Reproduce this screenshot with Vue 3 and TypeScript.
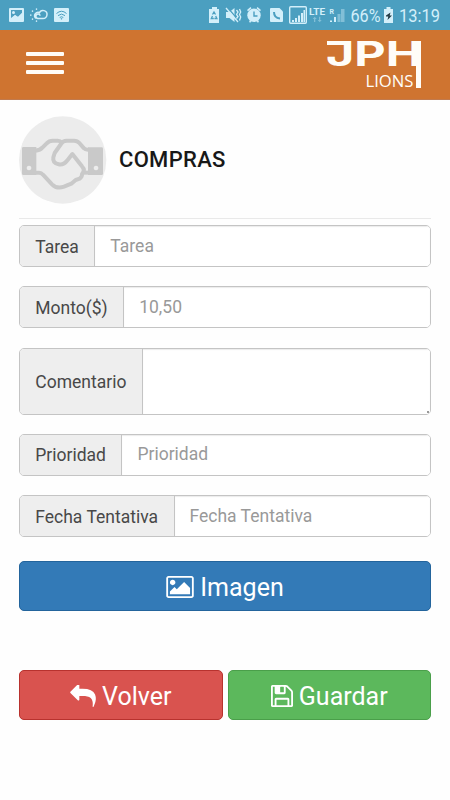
<script setup lang="ts">
import { ref } from 'vue'

interface Field {
  id: string
  label: string
  placeholder: string
  multiline?: boolean
}

const fields: Field[] = [
  { id: 'tarea', label: 'Tarea', placeholder: 'Tarea' },
  { id: 'monto', label: 'Monto($)', placeholder: '10,50' },
  { id: 'comentario', label: 'Comentario', placeholder: '', multiline: true },
  { id: 'prioridad', label: 'Prioridad', placeholder: 'Prioridad' },
  { id: 'fecha', label: 'Fecha Tentativa', placeholder: 'Fecha Tentativa' },
]

const values = ref<Record<string, string>>({})
</script>

<template>
  <div class="screen">
    <div class="status">
      <svg class="status-left" viewBox="0 0 80 30">
        <g fill="#d3effa">
          <path fill-rule="evenodd" d="M10 8h13q1 0 1 1v12q0 1-1 1H10q-1 0-1-1V9q0-1 1-1zM11 10v8l4-3 3 2 4-4v-3z" />
          <path d="M11 19l4-4 3 2 4-4v7H11z" />
          <circle cx="13.5" cy="12.5" r="1.5" />
          <rect x="54" y="8" width="15" height="14" rx="1" />
        </g>
        <g fill="none" stroke="#d3effa" stroke-width="1.5" stroke-linecap="round">
          <path d="M35.500 18a3.500 3.500 0 0 1 4-5.500M38 18.500h5a4 4 0 1 0-3.700-5.500M38 18.500a2.200 2.200 0 1 1 2-3.300" />
          <path d="M36.5 9v.2M32.5 11v.2M30.8 15v.2M32.5 19v.2M36.5 21v.2" />
        </g>
        <g fill="none" stroke="#4b9fc0" stroke-width="1">
          <path d="M56.5 13.5q5-4.5 10 0M58 15.6q3.500-3 7 0M59.700 17.500q1.800-1.500 3.600 0" />
          <circle cx="61.500" cy="18.800" r=".4" />
        </g>
      </svg>
      <svg class="status-right" viewBox="200 0 250 30">
        <g fill="#d3effa">
          <path d="M212 7h5v2h2v14h-10V9h3z" />
          <path d="M226 12h3.500l5-4v14l-5-4H226z" />
          <circle cx="254" cy="15.300" r="6.700" />
          <path d="M247 10l3.500-3 1 1.200-3.500 3zM261 10l-3.500-3-1 1.200 3.500 3zM249 21l1.500-1 1 1-1.500 2zM259 21l-1.500-1-1 1 1.500 2z" />
          <path d="M271 8h8.500l3.500 3.500V21q0 1-1 1h-11q-1 0-1-1V9q0-1 1-1z" />
          <path d="M292 20h2v2h-2zM295 18h2v4h-2zM298 15.500h2V22h-2zM301 13h2v9h-2zM303.500 10h1.500v12h-1.500z" />
          <path d="M330 20.500h2v1.500h-2zM334 17h2v5h-2z" />
          <path opacity=".4" d="M337.500 14h3v8h-3zM341 9h3.500v13H341z" />
          <path opacity=".4" d="M314 22v-3h-1.300l2-2.300 2 2.300h-1.400v3zM319 16.700V20h-1.300l2 2.300 2-2.300h-1.400v-3.300z" />
          <path d="M386.500 7h4v2h2.500v14h-9V9h2.500z" />
        </g>
        <g fill="none" stroke="#4b9fc0">
          <path stroke-width="1.300" d="M212.500 14.500l1.500-2.500 1.500 2.500M212.500 16l-1.200 2.500h2.500M215.700 16l1.200 2.500h-2.500" />
          <path stroke-width="1.400" d="M254 11.500V16h3.500" />
          <path stroke-width="2" d="M274 12q0 6 6 6.500" />
          <path stroke-width="1.200" d="M227.500 7.500l12 14" />
        </g>
        <path fill="none" stroke="#d3effa" stroke-width="1.300" d="M226 8l12 14M236.500 10l1.500 2-1.500 2.500 1.500 2-1.500 2M239.500 9l1.200 3-1.200 2.500 1.200 2.500-1.200 3.500" />
        <rect x="289.700" y="6.700" width="16.600" height="16.600" rx="1" fill="none" stroke="#d3effa" stroke-width="1.400" />
        <path fill="#243c46" d="M386 15.500l4.500-3-.8 3H392l-4.500 4.500.8-3.500H386z" />
        <g class="status-text" fill="#d3effa">
          <text x="309" y="15.300" class="tiny" textLength="16" lengthAdjust="spacingAndGlyphs">LTE</text>
          <text x="329.500" y="13.800" class="tinier">R</text>
          <text x="350.500" y="22.300" textLength="30" lengthAdjust="spacingAndGlyphs">66%</text>
          <text x="399" y="22.300" textLength="41" lengthAdjust="spacingAndGlyphs">13:19</text>
        </g>
      </svg>
    </div>

    <header class="navbar">
      <button class="menu" type="button">
        <span class="bar"></span>
        <span class="bar"></span>
        <span class="bar"></span>
      </button>
      <svg class="logo" viewBox="324 32 100 64" fill="#fffdf8">
        <rect x="327" y="41" width="18" height="4" />
        <text class="logo-main" x="326" y="65.500" textLength="96" lengthAdjust="spacingAndGlyphs">JPH</text>
        <rect x="416" y="41" width="5" height="47" />
        <text class="logo-sub" x="365.500" y="87" textLength="48" lengthAdjust="spacingAndGlyphs">LIONS</text>
      </svg>
    </header>

    <main class="content">
      <div class="heading">
        <svg class="avatar" viewBox="27 33 264 264">
          <circle cx="158" cy="165" r="131" fill="#ececec" />
          <path fill="#c9c9c9" fill-rule="evenodd" d="M40 126h39v84H40q-4 0-4-4v-76q0-4 4-4zM57 182a7 7 0 1 0 .1 0zM234 127h41q4 0 4 4v75q0 4-4 4h-41zM258 182a7 7 0 1 0 .1 0z" />
          <g fill="none" stroke="#c9c9c9" stroke-width="12" stroke-linejoin="round">
            <path d="M76 137Q91 136 98 127L110 115Q117 107 128 107H143Q151 107 156 113" />
            <path d="M76 203H87Q94 203 99 209L126 238Q141 253 162 245L184 236 197 225 209 221Q217 215 216 207 227 195 216 184L187 147 173 165Q161 181 146 178 127 174 130 157L134 144 153 117Q159 107 170 107H192Q202 107 208 114L222 130Q226 135 237 134" />
            <path d="M216 203H237" />
          </g>
        </svg>
        <h1 class="title">COMPRAS</h1>
      </div>

      <form class="form" @submit.prevent>
        <div v-for="f in fields" :key="f.id" class="group" :class="{ tall: f.multiline }">
          <label class="addon" :for="f.id">{{ f.label }}</label>
          <textarea v-if="f.multiline" :id="f.id" v-model="values[f.id]" class="control"></textarea>
          <input v-else :id="f.id" v-model="values[f.id]" class="control" type="text" :placeholder="f.placeholder" />
        </div>

        <button class="btn primary" type="button">
          <svg class="icon-picture" viewBox="-64 128 1920 1536" fill="#fff">
            <path d="M576 576q0 80-56 136t-136 56-136-56-56-136 56-136 136-56 136 56 56 136zm1024 384v448h-1408v-192l320-320 160 160 512-512zm96-704h-1600q-13 0-22.500 9.500t-9.500 22.500v1216q0 13 9.500 22.500t22.500 9.500h1600q13 0 22.500-9.500t9.500-22.500v-1216q0-13-9.500-22.500t-22.500-9.500zm160 32v1216q0 66-47 113t-113 47h-1600q-66 0-113-47t-47-113v-1216q0-66 47-113t113-47h1600q66 0 113 47t47 113z" />
          </svg>
          <span>Imagen</span>
        </button>

        <div class="actions">
          <button class="btn danger" type="button">
            <svg class="icon-reply" viewBox="0 128 1792 1536" fill="#fff">
              <path transform="matrix(-1 0 0 1 1792 0)" d="M1792 640q0 26-19 45l-512 512q-19 19-45 19t-45-19-19-45v-256h-224q-98 0-175.500 6t-154 21.500-133 42.500-105.500 69.500-80 101-48.500 138.500-17.500 181q0 55 5 123 0 6 2.500 23.500t2.500 26.500q0 15-8.500 25t-23.500 10q-16 0-28-17-7-9-13-22t-13.500-30-10.500-24q-127-285-127-451 0-199 53-333 162-403 875-403h224v-256q0-26 19-45t45-19 45 19l512 512q19 19 19 45z" />
            </svg>
            <span>Volver</span>
          </button>
          <button class="btn success" type="button">
            <svg class="icon-save" viewBox="128 128 1536 1536" fill="#fff">
              <path d="M512 1536h768v-384h-768v384zm896 0h128v-896q0-14-10-38.500t-20-34.500l-281-281q-10-10-34-20t-39-10v416q0 40-28 68t-68 28h-576q-40 0-68-28t-28-68v-416h-128v1280h128v-416q0-40 28-68t68-28h832q40 0 68 28t28 68v416zm-384-928v-320q0-13-9.500-22.500t-22.500-9.500h-192q-13 0-22.500 9.500t-9.500 22.500v320q0 13 9.500 22.500t22.500 9.500h192q13 0 22.500-9.500t9.500-22.500zm640 32v928q0 40-28 68t-68 28h-1344q-40 0-68-28t-28-68v-1344q0-40 28-68t68-28h928q40 0 88 20t76 48l280 280q28 28 48 76t20 88z" />
            </svg>
            <span>Guardar</span>
          </button>
        </div>
      </form>
    </main>
  </div>
</template>

<style>
body {
  background: #fff;
}
</style>

<style scoped>
.screen {
  width: 450px;
  height: 800px;
  overflow: hidden;
  background: #fefefe;
  font-family: Roboto, sans-serif;
}
.screen * {
  box-sizing: border-box;
}
.status {
  display: flex;
  justify-content: space-between;
  height: 30px;
  background: #4b9fc0;
}
.status-left {
  width: 80px;
  height: 30px;
}
.status-right {
  width: 250px;
  height: 30px;
}
.status-text {
  font-size: 19px;
}
.tiny {
  font-size: 8.5px;
  font-weight: 700;
}
.tinier {
  font-size: 7px;
  font-weight: 700;
}
.navbar {
  display: flex;
  justify-content: space-between;
  height: 70px;
  padding: 2px 26px 0;
  background: #cf7430;
  border-bottom: 1px solid #c17a4d;
}
.menu {
  display: flex;
  flex-direction: column;
  gap: 5px;
  width: 38px;
  height: 36px;
  margin-top: 20px;
  padding: 0;
  border: 0;
  background: none;
}
.bar {
  width: 38px;
  height: 4px;
  border-radius: 1px;
  background: #fffdf8;
}
.logo {
  width: 100px;
  height: 64px;
  overflow: visible;
}
.logo-main {
  font-family: Inter, sans-serif;
  font-size: 33.500px;
  font-weight: 700;
}
.logo-sub {
  font-family: "Open Sans", sans-serif;
  font-size: 17px;
}
.content {
  padding: 16px 19px 0;
}
.heading {
  display: flex;
  align-items: center;
  gap: 12px;
  height: 103px;
  padding-bottom: 14px;
  border-bottom: 1px solid #e9e9e9;
}
.avatar {
  flex: none;
  width: 88px;
  height: 88px;
}
.title {
  margin: 0;
  font-size: 22px;
  font-weight: 500;
  line-height: 26px;
  letter-spacing: 0.3px;
  color: #181818;
}
.form {
  display: flex;
  flex-direction: column;
  padding-top: 6px;
}
.group {
  display: flex;
  width: 412px;
  height: 42px;
  margin-bottom: 19.400px;
  border: 1px solid #c4c4c4;
  border-radius: 5px;
  overflow: hidden;
}
.group.tall {
  height: 67px;
  margin-bottom: 19px;
}
.addon {
  flex: none;
  display: flex;
  align-items: center;
  padding: 1px 15.500px 0 15.300px;
  border-right: 1px solid #c4c4c4;
  background: #eee;
  color: #484848;
  font-size: 17.500px;
}
.control {
  flex: 1;
  min-width: 0;
  padding: 0 15px 1px;
  border: 0;
  outline: 0;
  resize: none;
  background: #fff;
  box-shadow: inset 0 1px 1px rgba(0, 0, 0, 0.08);
  color: #555;
  font: 17.500px Roboto, sans-serif;
}
textarea.control {
  background: linear-gradient(#999, #999) right 1px bottom 1px / 2px 2px no-repeat #fff;
}
.control::placeholder {
  color: #999;
  opacity: 1;
}
.btn {
  display: flex;
  align-items: center;
  justify-content: center;
  gap: 6px;
  height: 50px;
  padding: 3px 0 0;
  border: 1px solid;
  border-radius: 5px;
  color: #fff;
  font: 25px/30px Roboto, sans-serif;
}
.btn span {
  padding-top: 1px;
}
.primary {
  width: 412px;
  margin-top: 4.400px;
  background: #337ab7;
  border-color: #23649c;
}
.actions {
  display: grid;
  grid-template-columns: 203.500px 203.500px;
  gap: 5px;
  margin-top: 59px;
}
.danger {
  background: #d9534f;
  border-color: #b8322e;
}
.success {
  background: #5cb85c;
  border-color: #4a9f4a;
}
.icon-picture {
  width: 28px;
  height: 22px;
}
.icon-reply {
  width: 26px;
  height: 22px;
}
.icon-save {
  width: 22px;
  height: 22px;
}
</style>
